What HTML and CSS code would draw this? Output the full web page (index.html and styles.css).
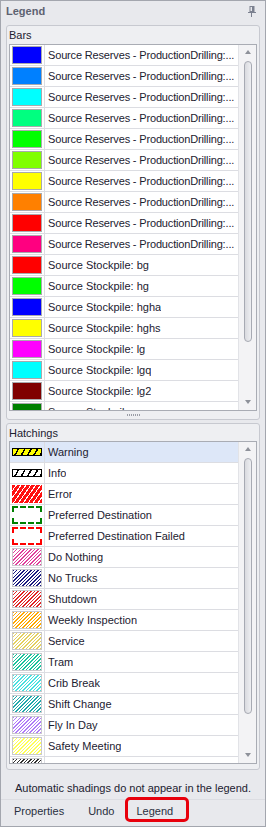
FILE: index.html
```html
<!DOCTYPE html>
<html lang="en">
<head>
    <meta charset="UTF-8">
    <title>Legend</title>
    <link rel="stylesheet" href="styles.css">
</head>
<body>

<div class="panel">
    <div class="title-bar">
        <span>Legend</span>
        <svg class="pin" width="8" height="11" viewBox="0 0 8 11">
            <rect x="2" y="0.5" width="4" height="5" fill="none" stroke="#7c8190"/>
            <rect x="4" y="1" width="2" height="5" fill="#7c8190"/>
            <rect x="0" y="6" width="8" height="1" fill="#7c8190"/>
            <rect x="3" y="7" width="1" height="4" fill="#7c8190"/>
        </svg>
    </div>

    <div class="panel-body">
        <div class="group">
            <div class="group-label">Bars</div>
            <div class="list bars-list">
                <div class="rows">
                    <div class="row"><div class="swatch-cell"><div class="swatch" style="background:#0000ff"></div></div><div class="label-cell long">Source Reserves - ProductionDrilling:...</div></div>
                    <div class="row"><div class="swatch-cell"><div class="swatch" style="background:#0080ff"></div></div><div class="label-cell long">Source Reserves - ProductionDrilling:...</div></div>
                    <div class="row"><div class="swatch-cell"><div class="swatch" style="background:#00ffff"></div></div><div class="label-cell long">Source Reserves - ProductionDrilling:...</div></div>
                    <div class="row"><div class="swatch-cell"><div class="swatch" style="background:#00ff80"></div></div><div class="label-cell long">Source Reserves - ProductionDrilling:...</div></div>
                    <div class="row"><div class="swatch-cell"><div class="swatch" style="background:#00ff00"></div></div><div class="label-cell long">Source Reserves - ProductionDrilling:...</div></div>
                    <div class="row"><div class="swatch-cell"><div class="swatch" style="background:#80ff00"></div></div><div class="label-cell long">Source Reserves - ProductionDrilling:...</div></div>
                    <div class="row"><div class="swatch-cell"><div class="swatch" style="background:#ffff00"></div></div><div class="label-cell long">Source Reserves - ProductionDrilling:...</div></div>
                    <div class="row"><div class="swatch-cell"><div class="swatch" style="background:#ff8000"></div></div><div class="label-cell long">Source Reserves - ProductionDrilling:...</div></div>
                    <div class="row"><div class="swatch-cell"><div class="swatch" style="background:#ff0000"></div></div><div class="label-cell long">Source Reserves - ProductionDrilling:...</div></div>
                    <div class="row"><div class="swatch-cell"><div class="swatch" style="background:#ff0080"></div></div><div class="label-cell long">Source Reserves - ProductionDrilling:...</div></div>
                    <div class="row"><div class="swatch-cell"><div class="swatch" style="background:#ff0000"></div></div><div class="label-cell">Source Stockpile: bg</div></div>
                    <div class="row"><div class="swatch-cell"><div class="swatch" style="background:#00ff00"></div></div><div class="label-cell">Source Stockpile: hg</div></div>
                    <div class="row"><div class="swatch-cell"><div class="swatch" style="background:#0000ff"></div></div><div class="label-cell">Source Stockpile: hgha</div></div>
                    <div class="row"><div class="swatch-cell"><div class="swatch" style="background:#ffff00"></div></div><div class="label-cell">Source Stockpile: hghs</div></div>
                    <div class="row"><div class="swatch-cell"><div class="swatch" style="background:#ff00ff"></div></div><div class="label-cell">Source Stockpile: lg</div></div>
                    <div class="row"><div class="swatch-cell"><div class="swatch" style="background:#00ffff"></div></div><div class="label-cell">Source Stockpile: lgq</div></div>
                    <div class="row"><div class="swatch-cell"><div class="swatch" style="background:#800000"></div></div><div class="label-cell">Source Stockpile: lg2</div></div>
                    <div class="row"><div class="swatch-cell"><div class="swatch" style="background:#008000"></div></div><div class="label-cell">Source Stockpile: mg</div></div>
                </div>
                <div class="scrollbar">
                    <div class="arrow-up"></div>
                    <div class="thumb bars-thumb"></div>
                    <div class="sb-spacer"></div>
                    <div class="arrow-down"></div>
                </div>
            </div>
            <div class="grip"><span></span></div>
        </div>

        <div class="group hatch-group">
            <div class="group-label">Hatchings</div>
            <div class="list hatch-list">
                <div class="rows">
                    <div class="row selected"><div class="swatch-cell"><div class="swatch thin warning"></div></div><div class="label-cell">Warning</div></div>
                    <div class="row"><div class="swatch-cell"><div class="swatch thin info"></div></div><div class="label-cell">Info</div></div>
                    <div class="row"><div class="swatch-cell"><div class="swatch error"></div></div><div class="label-cell">Error</div></div>
                    <div class="row"><div class="swatch-cell"><div class="swatch dashed dest"></div></div><div class="label-cell">Preferred Destination</div></div>
                    <div class="row"><div class="swatch-cell"><div class="swatch dashed dest-failed"></div></div><div class="label-cell">Preferred Destination Failed</div></div>
                    <div class="row"><div class="swatch-cell"><div class="swatch hatch" style="color:#e0409c"></div></div><div class="label-cell">Do Nothing</div></div>
                    <div class="row"><div class="swatch-cell"><div class="swatch hatch" style="color:#1c1c80"></div></div><div class="label-cell">No Trucks</div></div>
                    <div class="row"><div class="swatch-cell"><div class="swatch hatch" style="color:#e02424"></div></div><div class="label-cell">Shutdown</div></div>
                    <div class="row"><div class="swatch-cell"><div class="swatch hatch" style="color:#ffa800"></div></div><div class="label-cell">Weekly Inspection</div></div>
                    <div class="row"><div class="swatch-cell"><div class="swatch hatch" style="color:#e4d060"></div></div><div class="label-cell">Service</div></div>
                    <div class="row"><div class="swatch-cell"><div class="swatch hatch" style="color:#18c49c"></div></div><div class="label-cell">Tram</div></div>
                    <div class="row"><div class="swatch-cell"><div class="swatch hatch" style="color:#48e0e0"></div></div><div class="label-cell">Crib Break</div></div>
                    <div class="row"><div class="swatch-cell"><div class="swatch hatch" style="color:#20a8aa"></div></div><div class="label-cell">Shift Change</div></div>
                    <div class="row"><div class="swatch-cell"><div class="swatch hatch" style="color:#b07cf8"></div></div><div class="label-cell">Fly In Day</div></div>
                    <div class="row"><div class="swatch-cell"><div class="swatch hatch" style="color:#ffff58"></div></div><div class="label-cell">Safety Meeting</div></div>
                    <div class="row"><div class="swatch-cell"><div class="swatch hatch" style="color:#303030"></div></div><div class="label-cell">Lunch Break</div></div>
                </div>
                <div class="scrollbar">
                    <div class="arrow-up"></div>
                    <div class="thumb hatch-thumb"></div>
                    <div class="sb-spacer"></div>
                    <div class="arrow-down"></div>
                </div>
            </div>
        </div>
    </div>

    <div class="note">Automatic shadings do not appear in the legend.</div>

    <div class="tabs">
        <div class="tab">Properties</div>
        <div class="tab">Undo</div>
        <div class="tab active">Legend</div>
    </div>
</div>

</body>
</html>
```

FILE: styles.css
```css
body {
    margin: 0;
    font-family: "Liberation Sans", Arial, sans-serif;
    font-size: 11px;
    color: #1c2130;
}
.panel {
    width: 266px;
    height: 827px;
    box-sizing: border-box;
    border: 1px solid #a3a6ae;
    background: #e8e9ed;
    display: flex;
    flex-direction: column;
}
.title-bar {
    height: 19px;
    display: flex;
    align-items: center;
    justify-content: space-between;
    padding: 0 9px 0 5px;
    font-weight: bold;
    color: #5d6271;
}
.pin {
    display: block;
    margin-top: 1px;
}
.panel-body {
    padding: 5px 5px 0;
}
.group {
    border: 1px solid #c7c9d0;
    border-radius: 3px;
    background: #eeeff2;
    padding: 0 2px;
}
.hatch-group {
    margin-top: 3px;
    padding-bottom: 5px;
}
.group-label {
    height: 18px;
    line-height: 19px;
    color: #1c2130;
}
.hatch-group .group-label {
    height: 17px;
    line-height: 18px;
}
.list {
    display: flex;
    box-sizing: border-box;
    border: 1px solid #a9acb4;
    background: #fff;
}
.bars-list {
    height: 367px;
}
.hatch-list {
    height: 323px;
}
.rows {
    flex: 1;
    min-width: 0;
    overflow: hidden;
}
.row {
    display: flex;
    height: 20px;
    border-bottom: 1px solid #dcdde2;
}
.row.selected {
    background: #dde7f8;
}
.swatch-cell {
    width: 35px;
    flex-shrink: 0;
    box-sizing: border-box;
    border-right: 1px solid #dcdde2;
    padding: 1px 2px 0;
}
.label-cell {
    padding-left: 3px;
    line-height: 20px;
    white-space: nowrap;
    overflow: hidden;
}
.label-cell.long {
    letter-spacing: -0.16px;
}
.swatch {
    width: 30px;
    height: 18px;
    box-sizing: border-box;
    border: 1px solid #a9a9ad;
}
.swatch.thin {
    height: 8px;
    margin-top: 5px;
    border-color: #000;
}
.warning {
    background: repeating-linear-gradient(120deg, #ffff00 0 4px, #000 4px 5.5px);
}
.info {
    background: repeating-linear-gradient(120deg, #fff 0 4px, #000 4px 5.5px);
}
.error {
    border: none;
    background: repeating-linear-gradient(125deg, #ff1010 0 3px, #fff 3px 4px);
}
.dashed {
    border-width: 2px;
    border-style: dashed;
    background: #fff;
}
.dest {
    border-color: #008000;
}
.dest-failed {
    border-color: #ff0000;
}
.hatch {
    border-color: #c9c9cd;
    background: repeating-linear-gradient(135deg, currentColor 0 1px, #fff 1px 2.5px);
}
.scrollbar {
    width: 18px;
    flex-shrink: 0;
    box-sizing: border-box;
    border-left: 1px solid #e2e3e7;
    background: #f3f3f5;
    display: flex;
    flex-direction: column;
    align-items: center;
}
.arrow-up,
.arrow-down {
    width: 0;
    height: 0;
    border-left: 3.5px solid transparent;
    border-right: 3.5px solid transparent;
}
.arrow-up {
    margin-top: 5px;
    border-bottom: 4px solid #8e919a;
}
.arrow-down {
    margin-bottom: 6px;
    border-top: 4px solid #8e919a;
}
.thumb {
    width: 8px;
    margin-top: 7px;
    box-sizing: border-box;
    border: 1px solid #a7aab3;
    border-radius: 4px;
    background: linear-gradient(to right, #d9dadf, #eeeff2);
}
.bars-thumb {
    height: 281px;
}
.hatch-thumb {
    height: 256px;
}
.sb-spacer {
    flex: 1;
}
.grip {
    height: 8px;
    display: flex;
    justify-content: center;
    align-items: center;
}
.grip span {
    width: 13px;
    height: 2px;
    background: repeating-linear-gradient(to right, #9a9da6 0 1px, transparent 1px 2px);
}
.note {
    height: 29px;
    box-sizing: border-box;
    padding-top: 11px;
    line-height: 14px;
    text-align: center;
}
.tabs {
    flex: 1;
    display: flex;
    align-items: flex-start;
    border-top: 1px solid #dcdde2;
    padding-left: 1px;
}
.tab {
    padding: 4px 12px 0;
    line-height: 14px;
    color: #283040;
}
.tab.active {
    margin: -3px 0 0 -1px;
    padding: 4px 13px 1px 8px;
    border: 3px solid #e8000c;
    border-radius: 5px;
}
```
